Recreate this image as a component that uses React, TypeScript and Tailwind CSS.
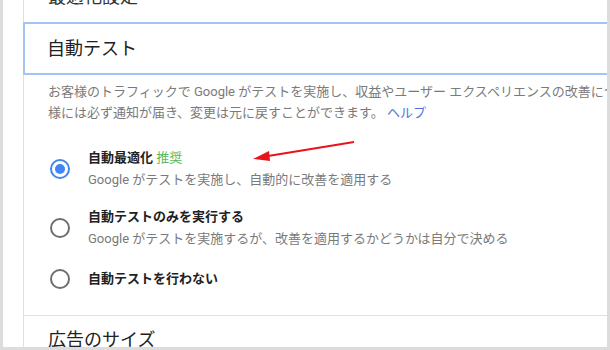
import React from "react";

const font = { fontFamily: "Roboto, 'Noto Sans CJK JP', sans-serif" };

function Radio({ checked }: { checked?: boolean }) {
  return checked ? (
    <div className="w-[20px] h-[20px] rounded-full border-2 border-[#4285f4] flex items-center justify-center shrink-0">
      <div className="w-[10px] h-[10px] rounded-full bg-[#4285f4]" />
    </div>
  ) : (
    <div className="w-[20px] h-[20px] rounded-full border-2 border-[#6f6f6f] shrink-0" />
  );
}

export default function App() {
  return (
    <div
      className="w-[610px] h-[350px] bg-[#dcdcdc] pl-[3px] pr-[3px] pb-[3px] overflow-hidden"
      style={font}
    >
      <div className="relative w-full h-full bg-white overflow-hidden flex">
        <div className="w-[20px] shrink-0" />
        <div className="flex-1 flex flex-col min-w-0">
          <div className="h-[22px] shrink-0 border-l border-[#e0e0e0] overflow-hidden pl-[24px]">
            <div className="text-[18px] leading-[24px] text-[#333] mt-[-15px] whitespace-nowrap">最適化設定</div>
          </div>
          <div className="h-[53px] shrink-0 border-2 border-[#a3c3f7] mr-[-10px] flex items-center pl-[22px]">
            <span className="text-[18px] leading-[24px] text-[#212121] whitespace-nowrap">自動テスト</span>
          </div>
          <div className="flex-1 shrink-0 border-l border-[#e0e0e0] flex flex-col">
            <div className="pl-[24px] pt-[6px] text-[13px] leading-[21px] text-[#7a7a7a] whitespace-nowrap">
              <div>お客様のトラフィックで Google がテストを実施し、収益やユーザー エクスペリエンスの改善につながる設定を自動で適用します。お客</div>
              <div>
                様には必ず通知が届き、変更は元に戻すことができます。 <span className="text-[#4a74e0]">ヘルプ</span>
              </div>
            </div>
            <div className="mt-[24px] flex items-center pl-[26px]">
              <Radio checked />
              <div className="ml-[18px] text-[13px] leading-[22px]">
                <div className="font-bold text-[#212121]">
                  自動最適化 <span className="font-normal text-[#5cb85c]">推奨</span>
                </div>
                <div className="text-[#7a7a7a]">Google がテストを実施し、自動的に改善を適用する</div>
              </div>
            </div>
            <div className="mt-[15px] flex items-center pl-[26px]">
              <Radio />
              <div className="ml-[18px] text-[13px] leading-[22px]">
                <div className="font-bold text-[#212121]">自動テストのみを実行する</div>
                <div className="text-[#7a7a7a]">Google がテストを実施するが、改善を適用するかどうかは自分で決める</div>
              </div>
            </div>
            <div className="mt-[18px] flex items-center pl-[26px]">
              <Radio />
              <div className="ml-[18px] text-[13px] leading-[22px]">
                <div className="font-bold text-[#212121]">自動テストを行わない</div>
              </div>
            </div>
            <div className="mt-[25px] border-t border-[#e0e0e0] pl-[24px] pt-[12px] pb-[10px]">
              <div className="text-[18px] leading-[24px] text-[#212121] whitespace-nowrap">広告のサイズ</div>
            </div>
          </div>
        </div>
        <svg className="absolute left-0 top-0" width="607" height="347" viewBox="0 0 607 347">
          <line x1="351" y1="142" x2="262" y2="156.5" stroke="#e8141c" strokeWidth="2" />
          <polygon points="250,159 266,151 267,161" fill="#e8141c" />
        </svg>
      </div>
    </div>
  );
}
